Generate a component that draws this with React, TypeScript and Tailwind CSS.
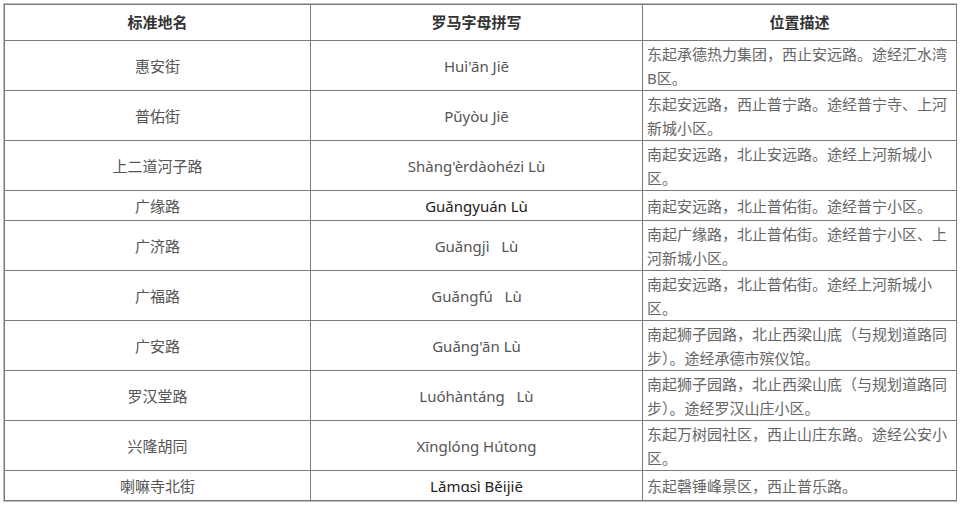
const rows = [
  { name: "惠安街", pinyin: "Huì'ān Jiē", desc: "东起承德热力集团，西止安远路。途经汇水湾B区。", h: "h-[50px]" },
  { name: "普佑街", pinyin: "Pǔyòu Jiē", desc: "东起安远路，西止普宁路。途经普宁寺、上河新城小区。", h: "h-[50px]" },
  { name: "上二道河子路", pinyin: "Shàng'èrdàohézi Lù", desc: "南起安远路，北止安远路。途经上河新城小区。", h: "h-[50px]" },
  { name: "广缘路", pinyin: "Guǎngyuán Lù", desc: "南起安远路，北止普佑街。途经普宁小区。", h: "h-[30px]", dark: true },
  { name: "广济路", pinyin: "Guǎngjì   Lù", desc: "南起广缘路，北止普佑街。途经普宁小区、上河新城小区。", h: "h-[50px]" },
  { name: "广福路", pinyin: "Guǎngfú   Lù", desc: "南起安远路，北止普佑街。途经上河新城小区。", h: "h-[50px]" },
  { name: "广安路", pinyin: "Guǎng'ān Lù", desc: "南起狮子园路，北止西梁山底（与规划道路同步）。途经承德市殡仪馆。", h: "h-[50px]" },
  { name: "罗汉堂路", pinyin: "Luóhàntáng   Lù", desc: "南起狮子园路，北止西梁山底（与规划道路同步）。途经罗汉山庄小区。", h: "h-[50px]" },
  { name: "兴隆胡同", pinyin: "Xīnglóng Hútong", desc: "东起万树园社区，西止山庄东路。途经公安小区。", h: "h-[50px]" },
  { name: "喇嘛寺北街", pinyin: "Lǎmɑsì Běijiē", desc: "东起磬锤峰景区，西止普乐路。", h: "h-[30px]", dark: true },
];

const cell = "border border-[#7a7a7a] p-0";

export default function App() {
  return (
    <div className="w-[960px] h-[505px] bg-white pt-[3px] pl-[3px] font-['Noto_Sans','Noto_Sans_CJK_SC',sans-serif] text-[15px]">
      <div className="w-[954px] border border-[#bdbdbd]">
        <table className="w-[952px] border-collapse table-fixed">
          <colgroup>
            <col className="w-[306px]" />
            <col className="w-[332px]" />
            <col className="w-[314px]" />
          </colgroup>
          <thead>
            <tr className="h-[36px] text-[#333] font-bold">
              <th className={cell}>标准地名</th>
              <th className={cell}>罗马字母拼写</th>
              <th className={cell}>位置描述</th>
            </tr>
          </thead>
          <tbody>
            {rows.map((r) => (
              <tr key={r.name} className={`${r.h} leading-[24px]`}>
                <td className={`${cell} text-center text-[#555]`}>{r.name}</td>
                <td
                  className={`${cell} text-center whitespace-pre ${r.dark ? "text-[#222]" : "text-[#555]"}`}
                >
                  {r.pinyin}
                </td>
                <td className={`${cell} px-[4px] text-left align-middle text-[#666]`}>
                  {r.desc}
                </td>
              </tr>
            ))}
          </tbody>
        </table>
      </div>
    </div>
  );
}
